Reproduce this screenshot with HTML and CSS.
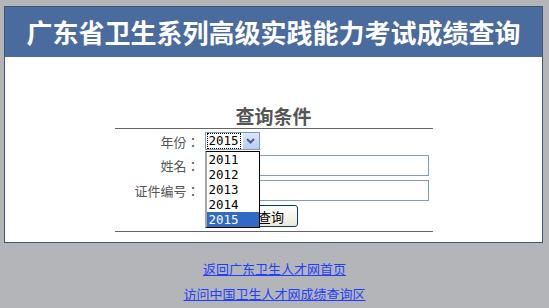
FILE: index.html
```html
<!DOCTYPE html>
<html lang="zh-CN">
<head>
    <meta charset="UTF-8">
    <title>广东省卫生系列高级实践能力考试成绩查询</title>
    <link rel="stylesheet" href="styles.css">
</head>
<body>
    <div class="box">
        <div class="hd">
            <h1>广东省卫生系列高级实践能力考试成绩查询</h1>
        </div>
        <div class="bd">
            <h2>查询条件</h2>
            <div class="form">
                <label lang="zh-TW">年份：</label>
                <div class="field">
                    <div class="select">
                        <span class="value">2015</span>
                        <span class="arrow">
                            <svg width="9" height="6" viewBox="0 0 9 6"><path d="M1 1 L4.5 4.5 L8 1" fill="none" stroke="#4d6185" stroke-width="2"/></svg>
                        </span>
                        <ul class="dropdown">
                            <li>2011</li>
                            <li>2012</li>
                            <li>2013</li>
                            <li>2014</li>
                            <li class="on">2015</li>
                        </ul>
                    </div>
                </div>
                <label lang="zh-TW">姓名：</label>
                <div class="field"><span class="input"></span></div>
                <label lang="zh-TW">证件编号：</label>
                <div class="field"><span class="input"></span></div>
                <span></span>
                <div class="field"><button class="btn">查询</button></div>
            </div>
        </div>
    </div>
    <div class="links">
        <a href="#">返回广东卫生人才网首页</a>
        <a href="#">访问中国卫生人才网成绩查询区</a>
    </div>
</body>
</html>
```

FILE: styles.css
```css
body {
    margin: 0;
    background: #b4b5b9;
    font-family: "Noto Sans CJK SC", sans-serif;
    font-size: 13px;
}
.box {
    margin: 6px 6px 0 4px;
    border: 1px solid #3c5677;
    background: #fff;
}
.hd {
    background: #4a6b9e;
    height: 50px;
    display: flex;
    align-items: center;
    justify-content: center;
}
.hd h1 {
    margin: 0;
    color: #fff;
    font-size: 26px;
    line-height: 32px;
    font-weight: bold;
    white-space: nowrap;
}
.bd {
    padding: 46px 0 10px;
}
.bd h2 {
    margin: 0;
    text-align: center;
    font-size: 19px;
    line-height: 25px;
    color: #555;
}
.form {
    width: 318px;
    margin: 0 auto;
    border-top: 1px solid #666;
    border-bottom: 1px solid #666;
    padding-bottom: 2px;
    display: grid;
    grid-template-columns: 89px 1fr;
    grid-template-rows: 24px 25px 25px 26px;
    align-items: center;
}
.form label {
    text-align: right;
    color: #555;
    padding-right: 4px;
    font-family: "Noto Sans CJK TC", sans-serif;
}
.field {
    display: flex;
    align-items: center;
    padding-left: 1px;
}
.select {
    position: relative;
    width: 52px;
    height: 16px;
    border: 1px solid #7f9db9;
    display: flex;
    align-items: center;
    padding: 0 0 0 1px;
}
.value {
    font-family: "DejaVu Sans Mono", monospace;
    font-size: 12.5px;
    line-height: 14px;
    padding: 0 1px;
    outline: 1px dotted #000;
    margin-left: 1px;
}
.arrow {
    margin-left: auto;
    width: 16px;
    height: 16px;
    background: linear-gradient(#dce6fd, #b7cbf6);
    border-left: 1px solid #fff;
    display: flex;
    align-items: center;
    justify-content: center;
}
.dropdown {
    position: absolute;
    top: 18px;
    left: -1px;
    width: 52px;
    margin: 0;
    padding: 0;
    list-style: none;
    background: #fff;
    border: 1px solid #000;
    border-left: 2px solid #a6a6a6;
    z-index: 2;
}
.dropdown li {
    height: 15px;
    line-height: 15px;
    padding-left: 2px;
    font-family: "DejaVu Sans Mono", monospace;
    font-size: 12.5px;
    color: #000;
}
.dropdown li.on {
    background: #316ac5;
    color: #fff;
}
.input {
    width: 222px;
    height: 19px;
    border: 1px solid #7f9db9;
}
.btn {
    margin-left: 38px;
    width: 55px;
    height: 22px;
    border: 1px solid #003c74;
    border-radius: 3px;
    background: linear-gradient(#ffffff, #ece9d8);
    font-family: "Noto Sans CJK SC", sans-serif;
    font-size: 13px;
    padding: 0 0 0 2px;
    color: #000;
}
.links {
    padding-top: 13px;
    display: flex;
    flex-direction: column;
    align-items: center;
}
.links a {
    color: #1f3fff;
    line-height: 25px;
}
```
